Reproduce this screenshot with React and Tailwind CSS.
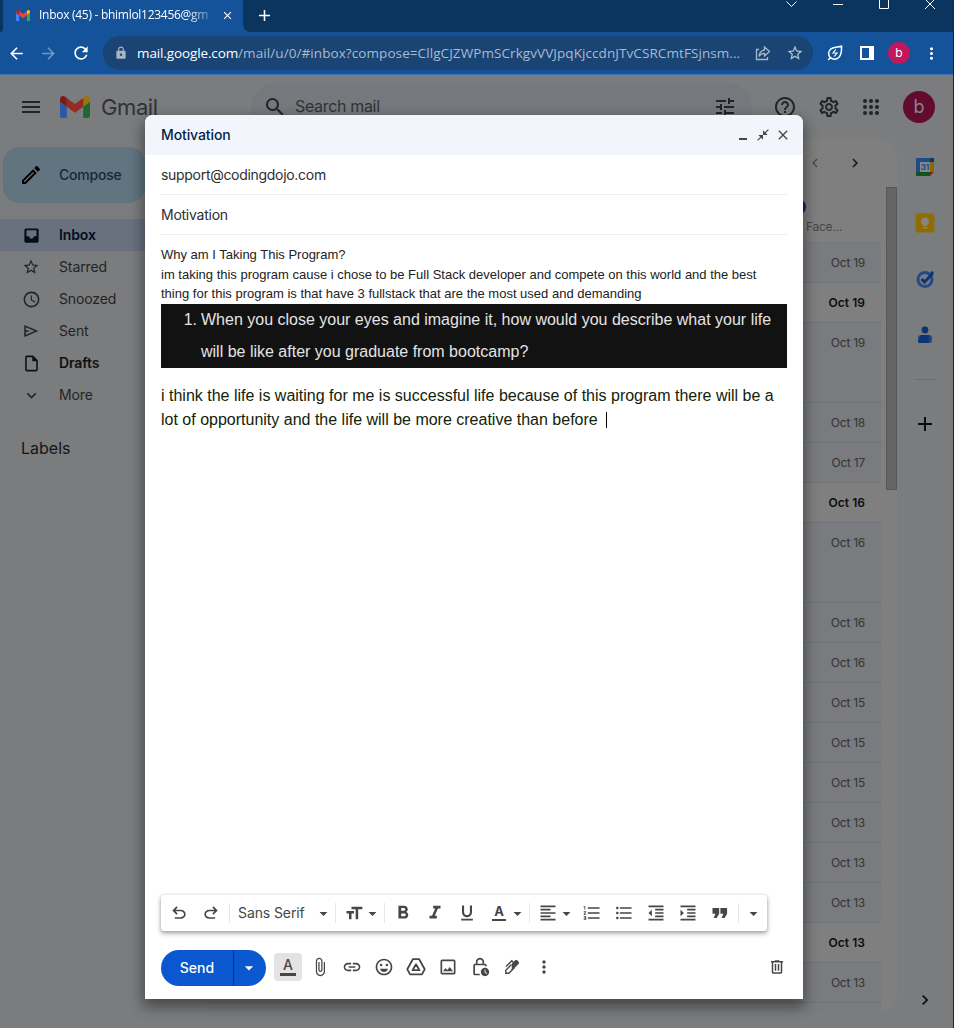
import React from "react";
import {
  MdMenu, MdSearch, MdTune, MdHelpOutline, MdOutlineSettings, MdStarBorder,
  MdSchedule, MdOutlineInsertDriveFile, MdExpandMore, MdOutlineCreate, MdFormatBold,
  MdFormatItalic, MdFormatUnderlined, MdFormatSize, MdFormatAlignLeft, MdFormatListNumbered,
  MdFormatListBulleted, MdFormatIndentDecrease, MdFormatIndentIncrease, MdAttachFile, MdLink,
  MdOutlineEmojiEmotions, MdOutlineImage, MdOutlineLockClock, MdMoreVert, MdClose,
  MdCloseFullscreen, MdArrowDropDown, MdChevronLeft, MdChevronRight, MdAdd, MdArrowBack,
  MdArrowForward, MdRefresh, MdLock,
} from "react-icons/md";

function Icon({ d, className = "size-5" }) {
  return (
    <svg viewBox="0 0 24 24" fill="currentColor" fillRule="evenodd" className={className}>
      <path d={d} />
    </svg>
  );
}

const UNDO = "M7 19v-2h7.1q1.575 0 2.738-1Q18 15 18 13.5t-1.162-2.5Q15.675 10 14.1 10H7.8l2.6 2.6L9 14 4 9l5-5 1.4 1.4L7.8 8h6.3q2.425 0 4.163 1.575Q20 11.15 20 13.5t-1.737 3.925Q16.525 19 14.1 19z";
const SEND = "M3 20V4l19 8zm2-3 11.85-5L5 7v3.5l6 1.5-6 1.5z";
const TRASH = "M15 4V3H9v1H4v2h1v13c0 1.1.9 2 2 2h10c1.1 0 2-.9 2-2V6h1V4h-5zm2 15H7V6h10v13zM9 8h2v9H9zm4 0h2v9h-2z";
const QUOTE = "M4.500 18H8l3-5V6H3v7h3.500zm9.500 0h3.500l3-5V6h-8v7h3.500z";
const INBOX = "M5 3h14a2 2 0 0 1 2 2v14a2 2 0 0 1-2 2H5a2 2 0 0 1-2-2V5a2 2 0 0 1 2-2zM5.700 5.500v7.500h3.300a3 3 0 0 0 6 0h3.300V5.500z";

function GmailMark({ className, dim }) {
  const c = dim
    ? ["#2c57a6", "#1f6834", "#7d1b15", "#922c24", "#9a7404"]
    : ["#4285f4", "#34a853", "#c5221f", "#ea4335", "#fbbc04"];
  return (
    <svg viewBox="52 42 88 66" className={className} preserveAspectRatio="none">
      <path fill={c[0]} d="M58 108h14V74L52 59v43c0 3.32 2.69 6 6 6" />
      <path fill={c[1]} d="M120 108h14c3.32 0 6-2.69 6-6V59l-20 15" />
      <path fill={c[4]} d="M120 48v26l20-15v-8c0-7.42-8.47-11.65-14.4-7.2" />
      <path fill={c[3]} d="M72 74V48l24 18 24-18v26L96 92" />
      <path fill={c[2]} d="M52 51v8l20 15V48l-5.6-4.2c-5.94-4.45-14.4-.22-14.4 7.2" />
    </svg>
  );
}

function BrowserChrome() {
  return (
    <div className="h-[75px] shrink-0 border-b border-[#3f72b3] bg-[#14529a] font-['Open_Sans','Noto_Sans',sans-serif]">
      <div className="flex h-8 bg-[#14529a]">
        <div className="w-[3px] rounded-br-[3px] bg-[#0b355f]" />
        <div className="flex h-[30px] w-[240px] items-center pl-[13px]">
          <GmailMark className="h-[11px] w-[14px]" />
          <div className="ml-[9px] w-[172px] whitespace-nowrap text-[12px] tracking-[-0.28px] text-white [mask-image:linear-gradient(to_right,black_86%,transparent_104%)]">
            Inbox (45) - bhimlol123456@gm
          </div>
          <MdClose className="ml-[10px] size-[13px] text-white" />
        </div>
        <div className="flex flex-1 rounded-bl-lg bg-[#0b355f] text-white">
          <div className="flex h-[30px] w-[43px] items-center justify-center">
            <MdAdd className="size-[19px]" />
          </div>
          <svg viewBox="0 0 160 12" className="ml-auto mr-3 h-3 w-[160px]" fill="none" stroke="white" strokeWidth="1">
            <path d="M5.5 1.5 10.500 6.500l5-5M52 4.500h10M98.500-4v12.500h9V-4M144-1l10 10M154-1l-10 10" />
          </svg>
        </div>
      </div>
      <div className="flex h-[42px] items-center text-white">
        <div className="flex w-[103px] items-center gap-[13px] pl-[7px]">
          <MdArrowBack className="size-[19px]" />
          <MdArrowForward className="size-[19px] text-[#7397c3]" />
          <MdRefresh className="size-[20px]" />
        </div>
        <div className="flex h-[34px] w-[710px] items-center rounded-full bg-[#194474] pl-[11px] pr-[9px]">
          <MdLock className="size-[14px] text-[#a9b4c3]" />
          <div className="ml-[9px] w-[610px] whitespace-nowrap text-[13.5px] tracking-[0.08px] text-[#a9bbd0]">
            <span className="tracking-[-0.12px] text-white">mail.google.com</span>
            /mail/u/0/#inbox?compose=CllgCJZWPmSCrkgvVVJpqKjccdnJTvCSRCmtFSjnsm...
          </div>
          <svg viewBox="0 0 16 16" className="ml-[8px] size-4" fill="none" stroke="#a9b7c8" strokeWidth="1.3">
            <path d="M4 4.500H1.500v10h11V12M9.500 2l5 4.500-5 4.500V8.300C7 8.300 5.200 9.300 4 11.500c.3-3.500 2-6 5.500-6.500z" />
          </svg>
          <MdStarBorder className="ml-[15px] size-[18px] text-[#b9c5d4]" />
        </div>
        <div className="flex flex-1 items-center pl-[14px]">
          <svg viewBox="0 0 16 16" className="size-4" fill="none" stroke="white" strokeWidth="1.5">
            <path d="M3.300 12.600C1 10 1 6 4 3.800 7 1.600 11 2.300 14.500 1.200c0 4 .5 8-2.500 11-2.500 2.300-6 2.300-8.700.4zM1.200 15l2.500-2.800" />
            <path d="M8.800 4.500 6 8h4l-2.800 3.500" strokeWidth="1.200" />
          </svg>
          <div className="ml-[17px] h-[14px] w-[14px] border-2 border-r-[5px] border-white" />
          <div className="ml-[14px] flex size-[22px] items-center justify-center rounded-full bg-[#c2185b] pb-px font-['Inter'] text-[12px]">b</div>
          <MdMoreVert className="ml-[12px] size-[19px]" />
        </div>
      </div>
    </div>
  );
}

function AppHeader() {
  return (
    <div className="flex h-16 items-center text-[#222425]">
      <MdMenu className="ml-[19px] size-6" />
      <GmailMark dim className="ml-[17px] h-[22px] w-[30px]" />
      <div className="ml-[11px] w-[60px] pt-px text-[22px] tracking-[-0.4px] text-[#303234]">Gmail</div>
      <div className="ml-[90px] flex h-12 w-[501px] items-center rounded-full bg-[#75787d] px-3">
        <MdSearch className="size-6" />
        <div className="ml-[8px] pb-[2px] text-[16px] tracking-[-0.33px] text-[#303336]">Search mail</div>
        <MdTune className="ml-auto mr-[3px] size-6" />
      </div>
      <MdHelpOutline className="ml-[21px] size-6" />
      <MdOutlineSettings className="ml-5 size-6" />
      <svg viewBox="0 0 18 18" className="ml-[21px] size-[18px]" fill="currentColor">
        {[3, 9, 15].map((y) => [3, 9, 15].map((x) => <circle key={x + "-" + y} cx={x} cy={y} r="2" />))}
      </svg>
      <div className="ml-[23px] flex size-8 items-center justify-center rounded-full bg-[#610c2e] pb-px text-[18px] text-[#858585]">b</div>
    </div>
  );
}

const NAV = [
  { label: "Inbox", icon: <Icon d={INBOX} className="size-[19px]" />, row: "bg-[#69717e] font-semibold text-[#020e1d]" },
  { label: "Starred", icon: <MdStarBorder className="size-[18px]" />, row: "text-[#222425]" },
  { label: "Snoozed", icon: <MdSchedule className="size-[19px]" />, row: "text-[#222425]" },
  { label: "Sent", icon: <Icon d={SEND} className="size-[18px]" />, row: "text-[#222425]" },
  { label: "Drafts", icon: <MdOutlineInsertDriveFile className="size-[19px]" />, row: "font-semibold text-[#101112]" },
  { label: "More", icon: <MdExpandMore className="size-[19px]" />, row: "text-[#222425]" },
];

function Sidebar() {
  return (
    <div className="w-[200px] shrink-0 pt-2">
      <div className="ml-[3px] flex h-14 w-[142px] items-center rounded-2xl bg-[#617480] pl-4 text-[14px] font-medium tracking-[-0.2px] text-[#122a3b]">
        <MdOutlineCreate className="size-6 text-black" />
        <span className="ml-4 pb-px">Compose</span>
      </div>
      <div className="mt-4">
        {NAV.map((n) => (
          <div key={n.label} className={"flex h-8 items-center text-[14px] tracking-[-0.12px] " + n.row}>
            <div className="flex w-[59px] justify-center pl-[3px]">{n.icon}</div>
            <span className="pb-px">{n.label}</span>
          </div>
        ))}
      </div>
      <div className="ml-[21px] mt-[25px] text-[16px] text-[#151617]">Labels</div>
    </div>
  );
}

const MAILS = [
  { date: "Oct 19" }, { date: "Oct 19", unread: true }, { date: "Oct 19", tall: true },
  { date: "Oct 18" }, { date: "Oct 17" }, { date: "Oct 16", unread: true },
  { date: "Oct 16", tall: true }, { date: "Oct 16" }, { date: "Oct 16" }, { date: "Oct 15" },
  { date: "Oct 15" }, { date: "Oct 15" }, { date: "Oct 13" }, { date: "Oct 13" },
  { date: "Oct 13" }, { date: "Oct 13", unread: true }, { date: "Oct 13" },
];

function MailList() {
  return (
    <div className="flex h-[873px] w-[697px] flex-col overflow-hidden rounded-2xl bg-[#7f7f7f]">
      <div className="flex h-12 shrink-0 items-center justify-end gap-[22px] pr-[33px]">
        <MdChevronLeft className="size-[18px] text-[#4b4c4e]" />
        <MdChevronRight className="size-[18px] text-[#151617]" />
      </div>
      <div className="flex min-h-0 flex-1">
        <div className="w-[681px]">
          <div className="flex h-[56px] flex-col items-end justify-end border-b border-[#75777a] pb-[6px] text-[12px] tracking-[-0.25px] text-[#46474a]">
            <div className="mr-[75px] h-4 w-6 rounded-full bg-[#06296b]" />
            <div className="mr-[39px] mt-[3px]">Bliss Face...</div>
          </div>
          {MAILS.map((m, i) => (
            <div
              key={i}
              className={
                "flex justify-end border-b border-[#6f7276] pr-4 pt-[11px] text-[12px] leading-[18px] " +
                (m.tall ? "h-20 " : "h-10 ") +
                (m.unread ? "bg-[#7f7f7f] font-semibold tracking-[0.05px] text-[#0c0c0d]" : "bg-[#797b7e] tracking-[-0.25px] text-[#323436]")
              }
            >
              {m.date}
            </div>
          ))}
          <div className="h-[10px] bg-[#797b7e]" />
        </div>
        <div className="ml-[5px] h-[303px] w-[11px] border border-[#585858] bg-[#656565]" />
      </div>
    </div>
  );
}

function SidePanel() {
  return (
    <div className="flex h-[889px] flex-1 flex-col items-center pt-[18px]">
      <svg viewBox="0 0 20 20" className="size-5">
        <path fill="#214a8c" d="M2 1h13v4H1V2a1 1 0 0 1 1-1z" />
        <path fill="#0c346f" d="M15 1h3a1 1 0 0 1 1 1v3h-4z" />
        <path fill="#214a8c" d="M1 5h4v10H1z" />
        <path fill="#8c6900" d="M15 5h4v10h-4z" />
        <path fill="#105323" d="M1 15h14v4H2a1 1 0 0 1-1-1z" />
        <path fill="#842218" d="M15 15h4l-4 4z" />
        <path fill="#858585" d="M5 5h10v10H5z" />
        <text x="10" y="13" textAnchor="middle" fontSize="8" fontWeight="700" fill="#214a8c" fontFamily="Inter">31</text>
      </svg>
      <svg viewBox="0 0 20 20" className="mt-9 size-5">
        <rect x="0.500" y="0.500" width="19" height="19" rx="2" fill="#906c05" />
        <path fill="#878580" d="M10 4.500a4 4 0 0 0-2.300 7.300V13h4.600v-1.200A4 4 0 0 0 10 4.500zM8 14h4v1.600H8z" />
      </svg>
      <svg viewBox="0 0 20 20" className="mt-9 size-5">
        <circle cx="10" cy="10.500" r="7" fill="none" stroke="#214a8c" strokeWidth="3" />
        <path d="m6.500 10 3 3 8-8.500" fill="none" stroke="#10356f" strokeWidth="3" />
        <circle cx="17" cy="4" r="1.700" fill="#10356f" />
      </svg>
      <svg viewBox="0 0 20 20" className="mt-9 size-5">
        <circle cx="10" cy="5" r="3.400" fill="#0b3472" />
        <path fill="#28457f" d="M3 13a3 3 0 0 1 3-3h8a3 3 0 0 1 3 3v3a2 2 0 0 1-2 2H5a2 2 0 0 1-2-2z" />
        <path fill="#0b3472" d="M6 10h8v3a4 4 0 0 1-2 5H5a2 2 0 0 1-2-1z" />
      </svg>
      <div className="mt-[34px] h-px w-5 bg-[#6b6d6f]" />
      <MdAdd className="mt-[32px] size-6 text-[#0a0a0b]" />
      <MdChevronRight className="mb-[18px] mt-auto size-5 text-[#0a0a0b]" />
    </div>
  );
}

function Tool({ children, w = "w-8" }) {
  return <div className={"flex shrink-0 items-center justify-center " + w}>{children}</div>;
}

function Divider() {
  return <div className="h-5 w-px shrink-0 bg-[#e4e6ea]" />;
}

function Caret() {
  return <MdArrowDropDown className="size-[19px]" />;
}

function FormatBar() {
  return (
    <div className="flex h-9 w-[606px] items-center rounded-[3px] bg-white pl-[2px] text-[#444746] shadow-[0_1px_3px_1px_rgba(60,64,67,0.2),0_3px_5px_rgba(60,64,67,0.3)]">
      <Tool><Icon d={UNDO} className="size-[20px]" /></Tool>
      <Tool><Icon d={UNDO} className="size-[20px] -scale-x-100" /></Tool>
      <div className="ml-[2px]"><Divider /></div>
      <div className="ml-2 w-[76px] whitespace-nowrap pb-px text-[14px] tracking-[-0.1px]">Sans Serif</div>
      <Caret />
      <div className="ml-[2px]"><Divider /></div>
      <Tool w="ml-2 w-5"><MdFormatSize className="size-[21px]" /></Tool>
      <div className="-ml-px"><Caret /></div>
      <div className="ml-[2px]"><Divider /></div>
      <Tool w="ml-[2px] w-8"><MdFormatBold className="size-[22px]" /></Tool>
      <Tool><MdFormatItalic className="size-[22px]" /></Tool>
      <Tool><MdFormatUnderlined className="size-5" /></Tool>
      <Tool>
        <div className="flex h-[15px] w-[14px] items-center justify-center border-b-2 border-current pb-[1px] text-[13px] font-bold leading-none">A</div>
      </Tool>
      <div className="-ml-[7px]"><Caret /></div>
      <div className="ml-[2px]"><Divider /></div>
      <Tool w="ml-2 w-5"><MdFormatAlignLeft className="size-5" /></Tool>
      <div className="-ml-px"><Caret /></div>
      <Tool w="w-8"><MdFormatListNumbered className="size-5" /></Tool>
      <Tool><MdFormatListBulleted className="size-5" /></Tool>
      <Tool><MdFormatIndentDecrease className="size-5" /></Tool>
      <Tool><MdFormatIndentIncrease className="size-5" /></Tool>
      <Tool><Icon d={QUOTE} className="size-5" /></Tool>
      <div className="ml-[2px]"><Divider /></div>
      <div className="ml-[5px]"><Caret /></div>
    </div>
  );
}

function ActionBar() {
  return (
    <div className="mt-[19px] flex h-9 items-center text-[#444746]">
      <div className="flex h-9 w-[105px] overflow-hidden rounded-full bg-[#0b57d0] text-white">
        <div className="flex w-[73px] items-center justify-center border-r border-[#0a3579] pb-px text-[14px] font-medium">Send</div>
        <div className="flex flex-1 items-center pl-[5px]"><MdArrowDropDown className="size-5" /></div>
      </div>
      <div className="ml-2 flex h-7 w-7 -translate-y-px items-center justify-center rounded bg-[#e3e3e3]">
        <div className="flex h-[17px] w-4 items-center justify-center border-b-[3px] border-current pb-[2px] text-[14px] font-medium leading-none">A</div>
      </div>
      <div className="ml-[2px] flex -translate-y-px">
        <Tool><MdAttachFile className="-ml-px size-5" /></Tool>
        <Tool><MdLink className="size-5" /></Tool>
        <Tool><MdOutlineEmojiEmotions className="size-5" /></Tool>
        <Tool>
          <svg viewBox="0 0 24 24" className="size-[22px]" fill="none" stroke="currentColor" strokeWidth="1.9" strokeLinejoin="round">
            <path d="M8.500 3.500h7l6 11-3 5.500h-13l-3-5.500z" />
            <path d="m12 9-3.800 6.500h7.600z" />
          </svg>
        </Tool>
        <Tool><MdOutlineImage className="size-5" /></Tool>
        <Tool><MdOutlineLockClock className="size-5" /></Tool>
        <Tool>
          <svg viewBox="0 0 20 20" className="size-5" fill="none" stroke="currentColor" strokeWidth="1.400">
            <path d="M9.500 7.500 3.800 13.200v3h3L12.500 10.500" />
            <path d="M4 9.500 9.800 3.700l1.700 1.700" />
            <path d="m10 6.500 3.200-3.200a1.500 1.500 0 0 1 2 0l1.500 1.500a1.500 1.500 0 0 1 0 2L12.500 11l-3 2.500z" fill="currentColor" stroke="none" />
          </svg>
        </Tool>
        <Tool><MdMoreVert className="size-5" /></Tool>
      </div>
      <div className="ml-auto mr-px flex -translate-y-px"><Icon d={TRASH} className="size-[18px]" /></div>
    </div>
  );
}

function ComposeWindow() {
  return (
    <div className="absolute left-[145px] top-[115px] flex h-[884px] w-[658px] flex-col rounded-t-lg bg-white shadow-[0_6px_14px_2px_rgba(0,0,0,0.42)]">
      <div className="flex h-10 shrink-0 items-center rounded-t-lg bg-[#f2f6fc] px-4 text-[14px] text-[#041e49]">
        <span className="pb-px font-medium tracking-[-0.1px]">Motivation</span>
        <div className="ml-auto flex items-center text-[#444746]">
          <div className="mt-[8px] h-[2px] w-2 bg-current" />
          <MdCloseFullscreen className="ml-[9px] size-[14px]" />
          <MdClose className="-mr-[4px] ml-[5px] size-4" />
        </div>
      </div>
      <div className="flex flex-1 flex-col px-4 text-[#222222]">
        <div className="h-10 border-b border-[#eceef1] text-[14px] leading-10 tracking-[-0.3px] text-[#2d2e30]">support@codingdojo.com</div>
        <div className="h-10 border-b border-[#eceef1] text-[14px] leading-10 tracking-[-0.25px] text-[#2d2e30]">Motivation</div>
        <div className="flex-1 pt-[10px] font-['Liberation_Sans',Arial,sans-serif] text-[13px] leading-[19.5px]">
          <div>Why am I Taking This Program?</div>
          <div>im taking this program cause i chose to be Full Stack developer and compete on this world and the best thing for this program is that have 3 fullstack that are the most used and demanding</div>
          <div className="flex bg-[#121212] text-[16px] leading-8 text-[#e4e4e4]">
            <div className="w-10 shrink-0 pr-[4px] text-right">1.</div>
            <div>When you close your eyes and imagine it, how would you describe what your life will be like after you graduate from bootcamp?</div>
          </div>
          <div className="mt-4 text-[16px] leading-6 text-[#12230a]">
            i think the life is waiting for me is successful life because of this program there will be a lot of opportunity and the life will be more creative than before
            <span className="ml-2 inline-block h-4 w-px bg-black align-[-3px]" />
          </div>
        </div>
        <FormatBar />
        <ActionBar />
        <div className="h-[13px]" />
      </div>
    </div>
  );
}

export default function App() {
  return (
    <div className="relative flex h-[1028px] w-[954px] flex-col overflow-hidden border-r border-[#232425] bg-[#7b7c7e] font-['Inter','Liberation_Sans',sans-serif]">
      <BrowserChrome />
      <AppHeader />
      <div className="flex flex-1">
        <Sidebar />
        <MailList />
        <SidePanel />
      </div>
      <ComposeWindow />
    </div>
  );
}
